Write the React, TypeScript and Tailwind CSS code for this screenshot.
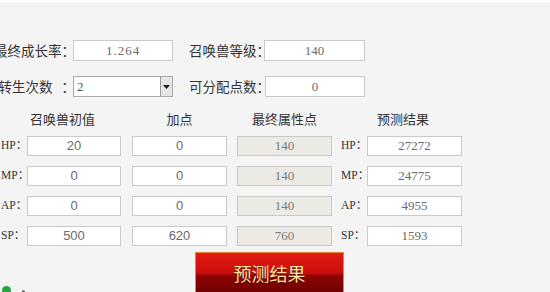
const cjk = "font-['Noto_Sans_CJK_SC',sans-serif]";
const serif = "font-['Liberation_Serif','Noto_Sans_CJK_SC',serif]";
const sans = "font-['Liberation_Sans','Noto_Sans_CJK_SC',sans-serif]";

const rows = [
  { name: "HP", base: "20", add: "0", total: "140", result: "27272" },
  { name: "MP", base: "0", add: "0", total: "140", result: "24775" },
  { name: "AP", base: "0", add: "0", total: "140", result: "4955" },
  { name: "SP", base: "500", add: "620", total: "760", result: "1593" },
];

const Box = ({ value, w, font, gray }: { value: string; w: string; font: string; gray?: boolean }) => (
  <div
    className={`${w} h-[20px] shrink-0 flex items-center justify-center border border-[#c9c9c9] text-[13px] ${font} ${
      gray ? "bg-[#ebeae5] text-[#7a7a7a]" : "bg-white text-[#6b6b6b]"
    }`}
  >
    {value}
  </div>
);

const App = () => {
  return (
    <div className="w-[550px] h-[292px] overflow-hidden bg-[#f4f4f4] relative">
      <div className="h-[2px] bg-white" />
      <div className="pt-[38px]">
        {/* top fields */}
        <div className="flex items-center h-[21px]">
          <div className={`w-[73px] shrink-0 flex justify-end whitespace-nowrap text-[13.5px] text-[#333] ${cjk}`}>
            <span className="mr-[-2px]">最终成长率：</span>
          </div>
          <div className={`w-[100px] h-[21px] flex items-center justify-center bg-white border border-[#c9c9c9] text-[13px] text-[#6b6b6b] ${serif} tracking-[1px]`}>
            1.264
          </div>
          <div className={`ml-[16px] w-[75px] shrink-0 whitespace-nowrap text-[13.5px] text-[#333] ${cjk}`}>召唤兽等级：</div>
          <div className={`w-[101px] h-[21px] flex items-center justify-center bg-white border border-[#c9c9c9] text-[13px] text-[#6b6b6b] ${serif}`}>
            140
          </div>
        </div>
        <div className="flex items-center h-[21px] mt-[15px]">
          <div className={`w-[73px] shrink-0 flex justify-end whitespace-nowrap text-[13.5px] text-[#333] ${cjk}`}>
            <span className="mr-[-2px]">转生次数&nbsp;&nbsp;&nbsp;：</span>
          </div>
          <div className="w-[100px] h-[21px] flex items-center bg-white border border-[#a9a9a9]">
            <span className={`flex-1 pl-[3px] text-[13px] text-[#555] ${serif}`}>2</span>
            <div className="w-[12px] h-[19px] flex items-center justify-center bg-[#e6e6e6] border-l border-[#9a9a9a]">
              <svg width="7" height="4" viewBox="0 0 7 4">
                <path d="M0 0h7L3.5 4z" fill="#222" />
              </svg>
            </div>
          </div>
          <div className={`ml-[16px] w-[76px] shrink-0 whitespace-nowrap text-[13.5px] text-[#333] ${cjk}`}>可分配点数：</div>
          <div className={`w-[100px] h-[21px] flex items-center justify-center bg-white border border-[#c9c9c9] text-[13px] text-[#6b6b6b] ${serif}`}>
            0
          </div>
        </div>

        {/* headers */}
        <div className={`flex items-center h-[20px] mt-[12px] whitespace-nowrap text-[13px] text-[#333] ${cjk}`}>
          <div className="ml-[30px] w-[65px] text-center">召唤兽初值</div>
          <div className="ml-[37px] w-[95px] text-center">加点</div>
          <div className="ml-[10px] w-[95px] text-center">最终属性点</div>
          <div className="ml-[45px] w-[52px] text-center">预测结果</div>
        </div>

        {/* stat rows */}
        <div className="mt-[7px] flex flex-col gap-[10px]">
          {rows.map((r) => (
            <div key={r.name} className="flex items-center h-[20px]">
              <div className={`w-[27px] shrink-0 pl-[1px] whitespace-nowrap text-[11.5px] text-[#333] ${serif}`}>{r.name}：</div>
              <Box value={r.base} w="w-[94px]" font={sans} />
              <div className="w-[11px]" />
              <Box value={r.add} w="w-[95px]" font={sans} />
              <div className="w-[10px]" />
              <Box value={r.total} w="w-[95px]" font={serif} gray />
              <div className={`w-[35px] shrink-0 pl-[9px] whitespace-nowrap text-[11.5px] text-[#333] ${serif}`}>{r.name}：</div>
              <Box value={r.result} w="w-[95px]" font={serif} />
            </div>
          ))}
        </div>

        {/* button */}
        <div className="mt-[6px] ml-[195px] w-[149px] h-[44px] border border-[#e8833a] bg-[linear-gradient(to_bottom,#e31b14_0%,#c80d0b_50%,#8f0404_52%,#6e0000_100%)] flex items-start justify-center pt-[7px]">
          <span className={`text-[18px] text-[#fde3a0] [text-shadow:0_1px_1px_#3a0000] ${cjk}`}>预测结果</span>
        </div>
      </div>

      <div className="absolute left-[2px] top-[286px] w-[9px] h-[9px] rounded-full bg-[#27a544]" />
      <div className="absolute left-[22px] top-[290px] w-[3px] h-[3px] rounded-full bg-[#666]" />
    </div>
  );
};

export default App;
